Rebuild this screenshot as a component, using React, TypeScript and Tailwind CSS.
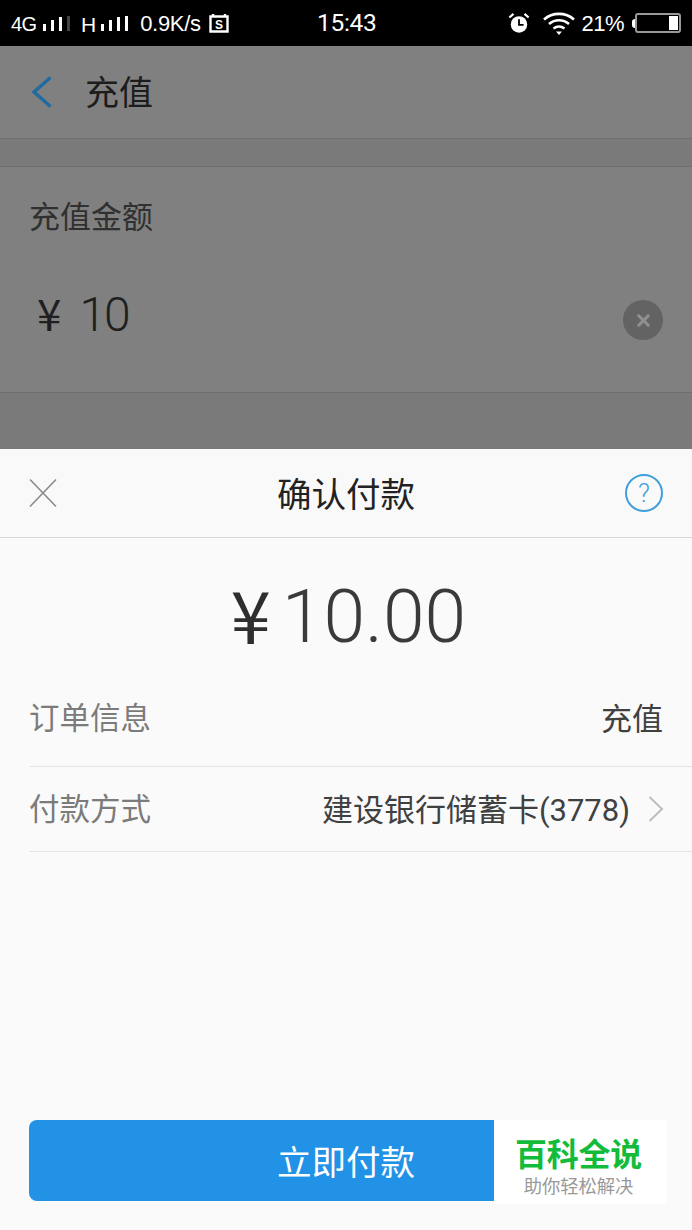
import React from 'react';
import { X } from 'lucide-react';

const font = { fontFamily: '"Roboto", "Noto Sans CJK SC", sans-serif' };

const Bars = ({ dim }: { dim?: boolean }): JSX.Element => (
  <svg width="27" height="18" viewBox="0 0 27 18" className="block">
    <rect x="0" y="9" width="3" height="7" fill="#fff" />
    <rect x="8" y="5" width="3" height="11" fill="#fff" />
    <rect x="16" y="2" width="3" height="14" fill="#fff" />
    <rect x="24" y="1" width="3" height="15" fill={dim ? '#444' : '#fff'} />
  </svg>
);

const StatusBar = (): JSX.Element => (
  <div className="h-[46px] bg-black text-white flex items-center pl-[11px] pr-[11px] shrink-0 font-['Liberation_Sans','Noto_Sans',sans-serif]">
    <div className="w-[306px] flex items-center shrink-0 mt-[2px]">
      <span className="text-[20px] leading-none tracking-[-0.5px] mr-[6px] w-[26px]">4G</span>
      <Bars dim />
      <span className="text-[21px] leading-none ml-[11px] mr-[5px]">H</span>
      <Bars />
      <span className="text-[22px] leading-none ml-[12px] -tracking-[0.3px]">0.9K/s</span>
      <svg width="20" height="20" viewBox="0 0 20 20" className="ml-[8px] block -mt-[2px]">
        <path d="M1.500 3.500h17v15h-17zM4 1v3M16 1v3" fill="none" stroke="#fff" strokeWidth="2.400" />
        <text x="10" y="15.500" textAnchor="middle" fontSize="12" fontWeight="700" fill="#fff">S</text>
      </svg>
    </div>
    <span className="text-[24.500px] leading-none w-[59px] mt-[1px] text-white font-['Roboto',sans-serif] -tracking-[0.3px]">15:43</span>
    <div className="flex-1 flex items-center justify-end">
      <svg width="22" height="24" viewBox="0 0 24 24" className="block">
        <circle cx="12" cy="13.500" r="9" fill="#fff" />
        <path d="M12 8v6h5" fill="none" stroke="#000" strokeWidth="2" />
        <path d="M1.500 6 6 2M22.500 6 18 2" stroke="#fff" strokeWidth="2.400" />
      </svg>
      <svg width="32" height="24" viewBox="0 0 32 24" className="block ml-[13px]">
        <path d="M1 8.500C9.500 1 22.500 1 31 8.500M6 13C12 8 20 8 26 13M10.500 17.500C14 15 18 15 21.500 17.500" fill="none" stroke="#fff" strokeWidth="2.600" />
        <path d="M13 20.500h6L16 24z" fill="#fff" />
      </svg>
      <span className="text-[22px] leading-none ml-[6px] mt-[1px] -tracking-[0.5px]">21%</span>
      <div className="w-[3px] h-[9px] bg-white ml-[8px] rounded-l-sm" />
      <div className="w-[46px] h-[20px] border-2 border-[#999] rounded-[3px] flex justify-end items-center pr-[1px]">
        <div className="w-[9px] h-[14px] bg-white" />
      </div>
    </div>
  </div>
);

const Backdrop = (): JSX.Element => (
  <div className="h-[403px] shrink-0 bg-[#7a7a7b] flex flex-col">
    <div className="h-[93px] bg-[#808080] border-b border-[#6f6f6f] flex items-center pl-[31px] shrink-0">
      <svg width="22" height="32" viewBox="0 0 22 32" className="block">
        <path d="M19.500 1.500 3 16l16.500 14.500" fill="none" stroke="#1f6a9f" strokeWidth="3.400" />
      </svg>
      <span className="text-[34px] leading-none text-[#1c1c1c] ml-[32px] mt-[1px]">充值</span>
    </div>
    <div className="h-[27px] shrink-0" />
    <div className="h-[227px] bg-[#808080] border-y border-[#6f6f6f] shrink-0 px-[29px]">
      <div className="text-[31px] leading-none text-[#303030] mt-[35px]">充值金额</div>
      <div className="flex items-start mt-[58px]">
        <span className="text-[44px] leading-none text-[#1f1f1f] ml-[8px] -mt-[1px] font-['Noto_Sans_CJK_SC',sans-serif]">¥</span>
        <span className="text-[48px] leading-none font-light text-[#1f1f1f] ml-[18px] -tracking-[2px]">10</span>
        <div className="ml-auto mt-[9px] w-[40px] h-[40px] rounded-full bg-[#636363] flex items-center justify-center">
          <X size={19} strokeWidth={4} className="text-[#8f8f8f]" />
        </div>
      </div>
    </div>
  </div>
);

const Row = ({ label, children, h }: { label: string; children: React.ReactNode; h: string }): JSX.Element => (
  <div className={`${h} ml-[29px] border-b border-[#e5e5e5] flex items-center justify-between pr-[29px]`}>
    <span className="text-[30.500px] leading-none text-[#7b7b7b]">{label}</span>
    {children}
  </div>
);

const Sheet = (): JSX.Element => (
  <div className="flex-1 bg-[#fafafa] flex flex-col relative">
    <div className="h-[89px] bg-[#f9f9fa] border-b border-[#d8d8d8] flex items-center justify-between px-[29px] shrink-0">
      <div className="w-[38px]">
        <svg width="28" height="30" viewBox="0 0 28 30" className="block">
          <path d="M1 1.500 27 28.500M27 1.500 1 28.500" fill="none" stroke="#8a8a8a" strokeWidth="1.600" />
        </svg>
      </div>
      <span className="text-[34.500px] leading-none text-[#222] mt-[5px]">确认付款</span>
      <div className="w-[38px] h-[38px] rounded-full border-2 border-[#41a0dc] flex items-center justify-center text-[26px] font-light leading-none text-[#41a0dc]">?</div>
    </div>
    <div className="h-[140px] pt-[16px] pl-[5px] flex items-center justify-center shrink-0 text-[#3a3a3a]">
      <span className="text-[72px] leading-none text-[#2e2e2e] -mt-[6px] font-['Noto_Sans_CJK_SC',sans-serif]">¥</span>
      <span className="text-[75px] leading-none font-light ml-[11px]">10.00</span>
    </div>
    <Row label="订单信息" h="h-[89px] pb-[5px]">
      <span className="text-[31px] leading-none text-[#404040]">充值</span>
    </Row>
    <Row label="付款方式" h="h-[85px] pt-[3px]">
      <div className="flex items-center">
        <span className="text-[31px] leading-none text-[#404040]">建设银行储蓄卡(3778)</span>
        <svg width="16" height="26" viewBox="0 0 16 26" className="block ml-[18px] -mr-[1px] -mt-[3px]">
          <path d="M1.500 1 14 13 1.500 25" fill="none" stroke="#bdbdbd" strokeWidth="2" />
        </svg>
      </div>
    </Row>
    <div className="mt-auto mb-[29px] mx-[29px] h-[81px] pt-[5px] rounded-lg bg-[#2192e6] flex items-center justify-center text-white text-[34.500px] leading-none">
      立即付款
    </div>
    <div className="absolute left-[494px] top-[671px] w-[173px] h-[84px] bg-white flex flex-col items-center pt-[19px] pr-[4px]">
      <span className="text-[32px] leading-none font-bold text-[#12bc3a] tracking-[-0.3px]">百科全说</span>
      <span className="text-[18.300px] leading-none text-[#999] mt-[7px]">助你轻松解决</span>
    </div>
  </div>
);

const App = (): JSX.Element => (
  <div className="w-[692px] h-[1230px] flex flex-col overflow-hidden" style={font}>
    <StatusBar />
    <Backdrop />
    <Sheet />
  </div>
);

export default App;
